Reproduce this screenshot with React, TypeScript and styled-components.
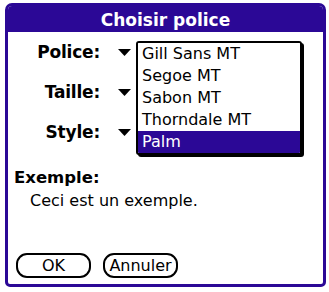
import React from "react";
import styled, { createGlobalStyle } from "styled-components";

const PURPLE = "#2b0896";

const Global = createGlobalStyle`
  html, body { margin: 0; padding: 0; background: #ffffff; }
  body { font-family: "DejaVu Sans", "Liberation Sans", sans-serif; color: #000; }
  * { box-sizing: border-box; }
`;

const Dialog = styled.div`
  margin: 3px 0 0 5px;
  width: 321px;
  height: 284px;
  border: 3px solid ${PURPLE};
  border-radius: 7px 7px 5px 5px;
  background: #fff;
  display: flex;
  flex-direction: column;
  overflow: hidden;
`;

const TitleBar = styled.div`
  height: 26px;
  background: ${PURPLE};
  color: #fff;
  font-weight: bold;
  font-size: 17px;
  line-height: 26px;
  padding-top: 1px;
  text-align: center;
`;

const Body = styled.div`
  flex: 1;
  display: flex;
  flex-direction: column;
  padding: 0 0 6px 0;
`;

const Form = styled.div`
  position: relative;
  display: flex;
  flex-direction: column;
`;

const Row = styled.div`
  height: 40px;
  display: grid;
  grid-template-columns: 92px 13px 1fr;
  column-gap: 18px;
  align-items: center;
`;

const Label = styled.div`
  text-align: right;
  font-weight: bold;
  font-size: 17px;
  letter-spacing: -0.2px;
`;

const Arrow = styled.svg`
  display: block;
  width: 13px;
  height: 7px;
  margin-top: 1px;
`;

const PopupList = styled.div`
  position: absolute;
  left: 128px;
  top: 9px;
  width: 166px;
  border: 2px solid #000;
  border-radius: 3px;
  box-shadow: 2px 2px 0 #000;
  background: #fff;
  overflow: hidden;
`;

const Item = styled.div<{ $selected?: boolean }>`
  height: 22px;
  line-height: 22px;
  padding-left: 4px;
  font-size: 16px;
  background: ${(p) => (p.$selected ? PURPLE : "#fff")};
  color: ${(p) => (p.$selected ? "#fff" : "#000")};
`;

const Heading = styled.div`
  margin: 16px 0 0 6px;
  font-weight: bold;
  font-size: 16.5px;
  line-height: 20px;
`;

const Sample = styled.div`
  margin: 3px 0 0 22px;
  font-size: 16px;
  line-height: 20px;
`;

const Buttons = styled.div`
  margin-top: auto;
  padding-left: 8px;
  display: flex;
  gap: 12px;
`;

const Button = styled.button`
  width: 75px;
  height: 25px;
  border: 2px solid #000;
  border-radius: 11px;
  background: #fff;
  font-family: "DejaVu Sans", "Liberation Sans", sans-serif;
  font-size: 16px;
  line-height: 20px;
  padding: 0;
  color: #000;
`;

const DownArrow = () => (
  <Arrow viewBox="0 0 13 7">
    <polygon points="0,0 13,0 6.5,7" fill="#000" />
  </Arrow>
);

const fonts = ["Gill Sans MT", "Segoe MT", "Sabon MT", "Thorndale MT", "Palm"];

export default function App() {
  return (
    <>
      <Global />
      <Dialog>
        <TitleBar>Choisir police</TitleBar>
        <Body>
          <Form>
            <Row>
              <Label>Police:</Label>
              <DownArrow />
              <span />
            </Row>
            <Row>
              <Label>Taille:</Label>
              <DownArrow />
              <span />
            </Row>
            <Row>
              <Label>Style:</Label>
              <DownArrow />
              <span />
            </Row>
            <PopupList>
              {fonts.map((f) => (
                <Item key={f} $selected={f === "Palm"}>
                  {f}
                </Item>
              ))}
            </PopupList>
          </Form>
          <Heading>Exemple:</Heading>
          <Sample>Ceci est un exemple.</Sample>
          <Buttons>
            <Button>OK</Button>
            <Button>Annuler</Button>
          </Buttons>
        </Body>
      </Dialog>
    </>
  );
}
